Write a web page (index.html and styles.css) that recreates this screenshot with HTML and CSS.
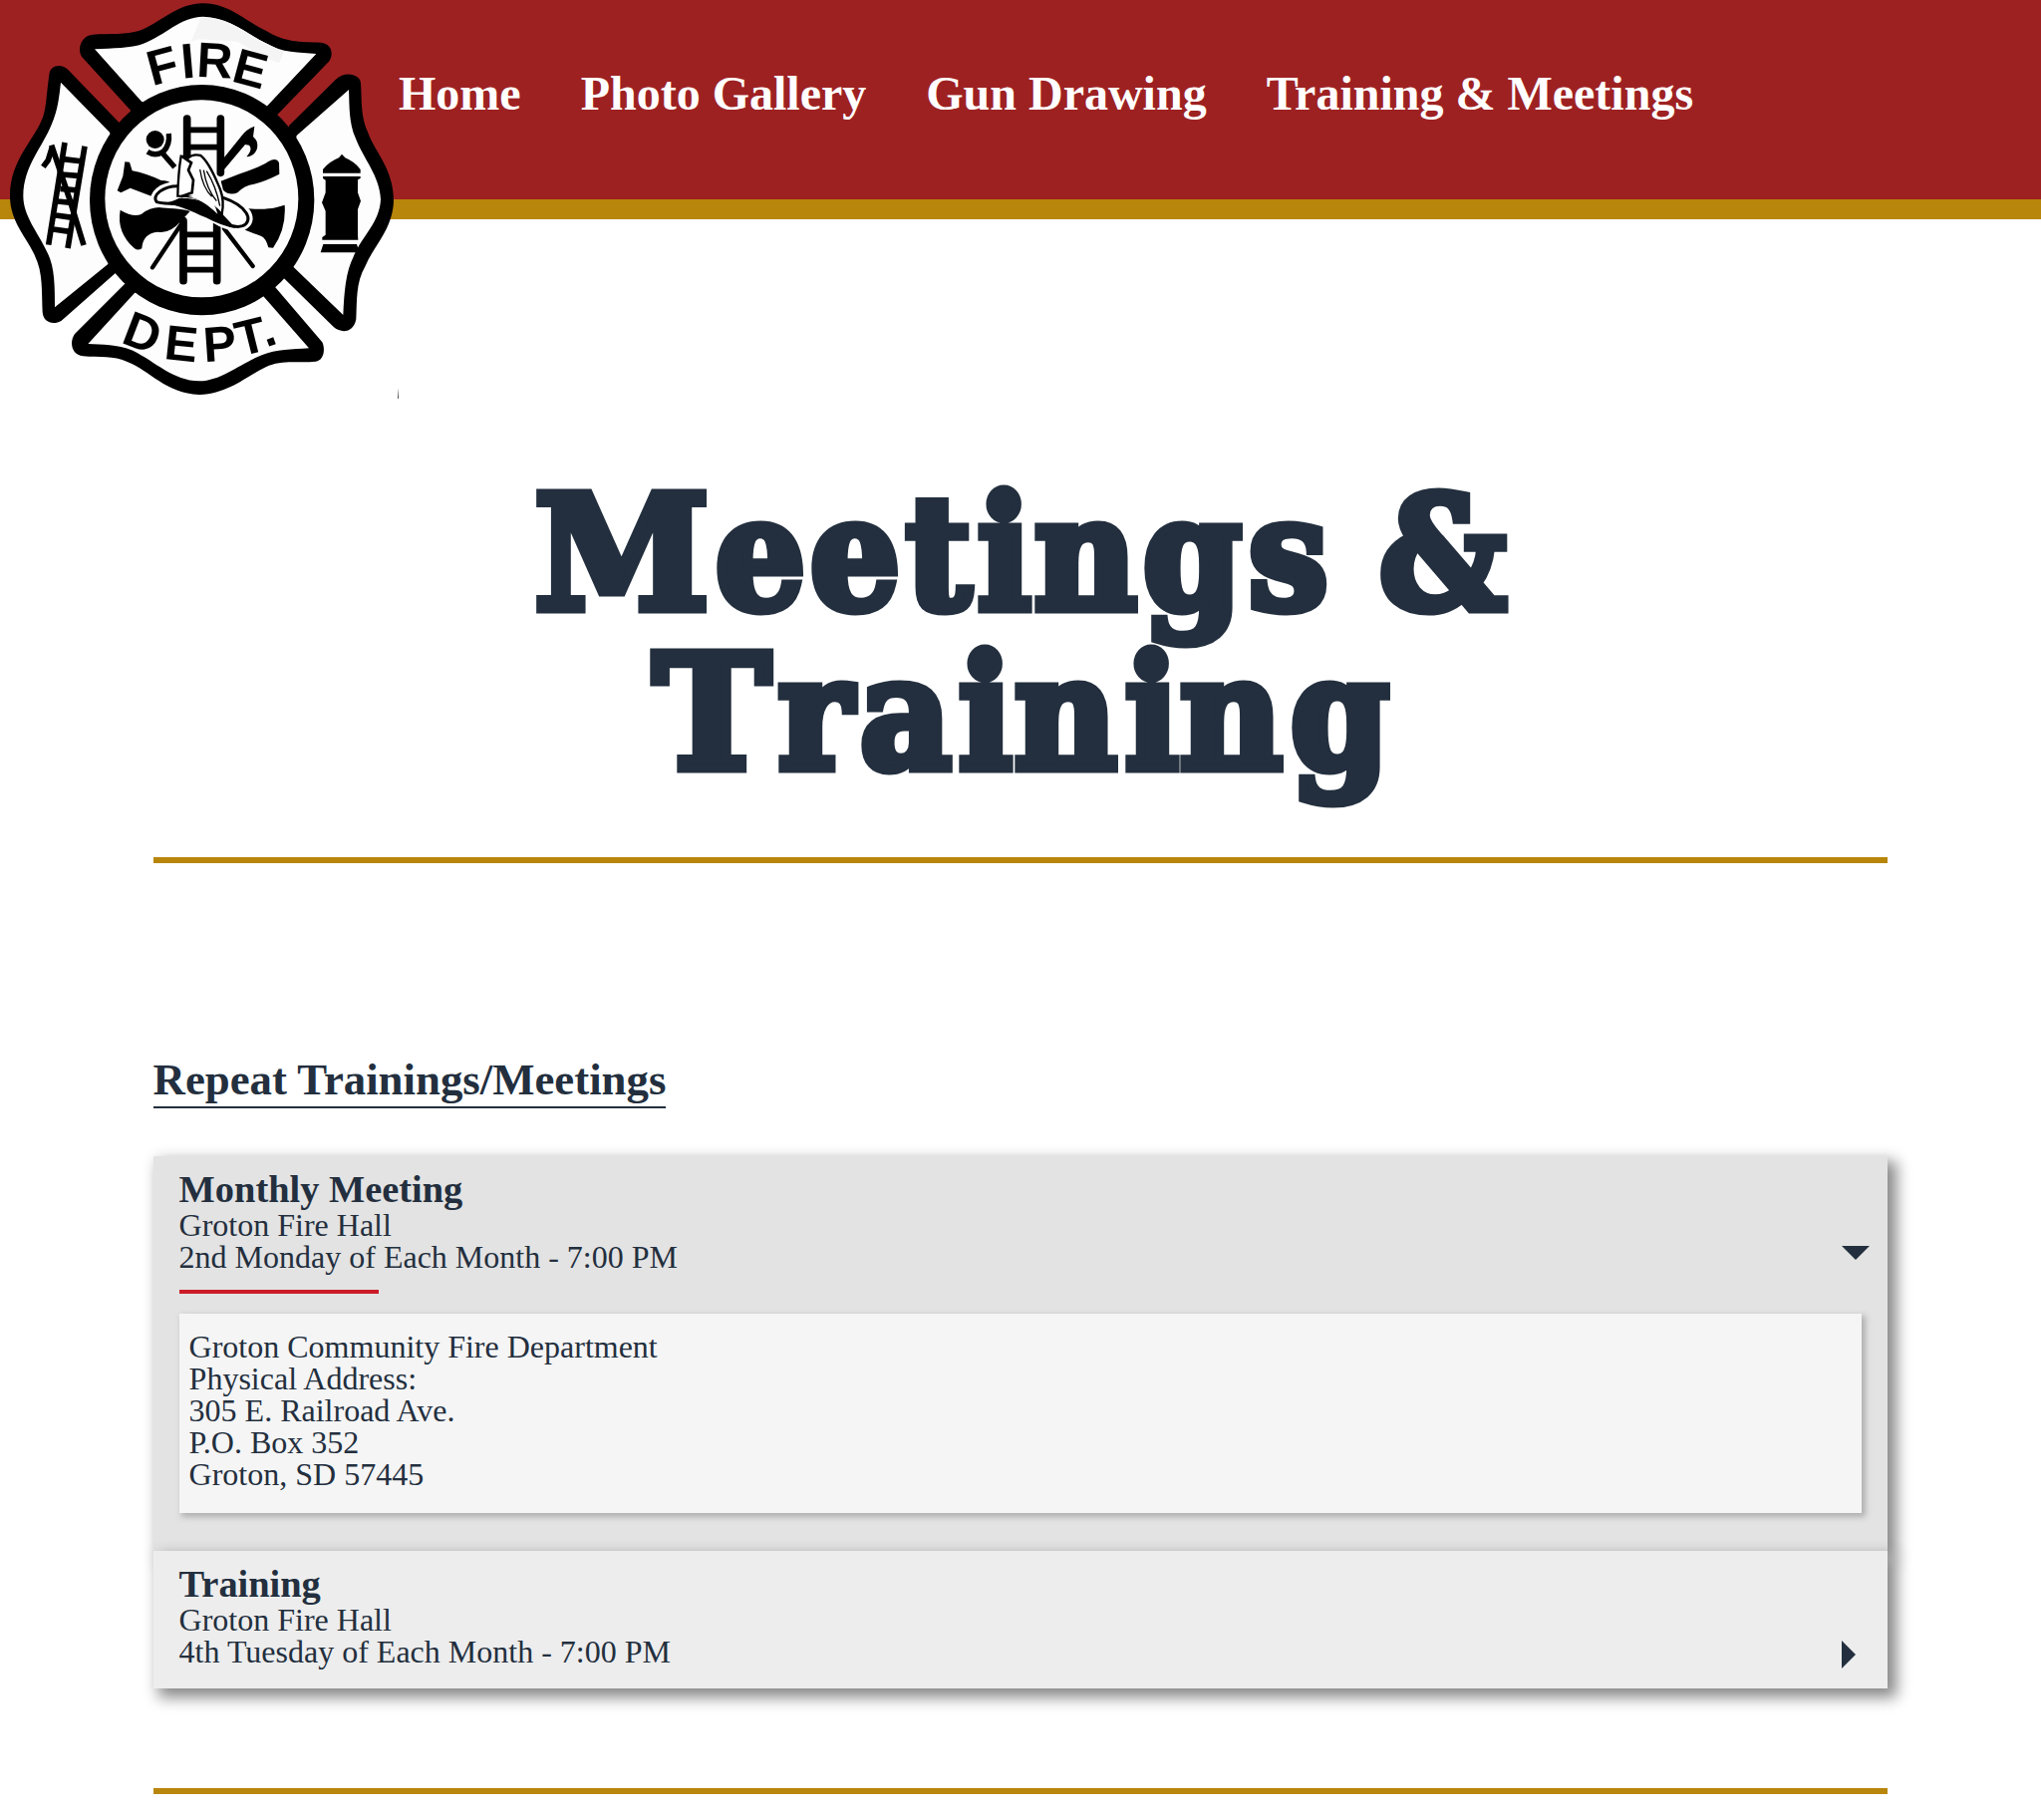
FILE: index.html
```html
<!DOCTYPE html>
<html lang="en">
<head>
<meta charset="utf-8">
<title>Meetings &amp; Training</title>
<link rel="stylesheet" href="styles.css">
</head>
<body>
<header class="site-header">
  <a class="logo" href="#" aria-label="Fire Dept.">
    <svg viewBox="0 0 1230 1230" width="410" height="410">
      <!-- shield arms -->
      <path d="M400 340L247 172C230 150 245 105 280 104C330 100 380 105 420 92C480 72 530 10 612 10C690 10 740 65 800 92C860 128 900 125 965 128C1000 130 1005 165 990 185L830 350Z"/>
      <path d="M358 368L205 210C185 190 150 195 148 225C140 280 140 320 130 350C105 420 30 480 30 590C30 670 85 720 105 770C130 820 125 880 128 940C130 970 160 980 185 965L350 820Z"/>
      <path d="M870 378L1010 240C1040 210 1085 225 1086 250C1090 310 1085 350 1108 400C1130 460 1185 510 1185 605C1182 690 1125 740 1100 800C1070 850 1075 910 1072 960C1065 1000 1030 1005 1005 985L855 838Z"/>
      <path d="M375 855L225 1005C208 1030 215 1068 250 1072C300 1078 340 1068 385 1090C450 1115 500 1185 600 1188C690 1185 745 1130 800 1105C850 1080 900 1095 950 1088C975 1085 980 1050 970 1030L825 860Z"/>
      <g fill="#fdfdfd">
        <path d="M285 148C340 145 395 145 430 132C500 105 540 52 612 50C690 52 740 100 800 130C850 160 900 158 952 162L803 320L608 400L426 305Z"/>
        <path d="M183 248L330 398L400 602L325 795L165 925C165 860 165 800 140 755C115 700 70 650 70 590C70 500 130 440 155 375C175 330 178 290 183 248Z"/>
        <path d="M1050 270L893 408L850 602L883 803L1033 948C1036 880 1040 820 1065 770C1090 710 1143 670 1146 600C1143 530 1095 480 1070 415C1050 370 1052 320 1050 270Z"/>
        <path d="M265 1035L405 882L608 800L793 892L930 1048C880 1052 830 1052 790 1068C720 1095 670 1145 600 1147C520 1145 470 1090 400 1055C350 1035 310 1038 265 1035Z"/>
      </g>
      <path fill="#f4f4f4" d="M605 52C690 52 740 100 800 130L855 156L840 190L780 165L715 125L600 118L575 125Z"/>
      <ellipse cx="608" cy="602" rx="338" ry="347"/>
      <ellipse cx="607" cy="598" rx="291" ry="297" fill="#fdfdfd"/>
      <!-- lettering -->
      <g class="logo-text">
        <text x="458 549 590 693" y="259 236 230 244" rotate="-15 -5 3 15">FIRE</text>
        <text x="361 491 615 723 801" y="1030 1080 1090 1073 1046" rotate="21 6 -4 -14 -20">DEPT.</text>
      </g>
      <!-- ladder and pike -->
      <g fill="none" stroke="#000" stroke-width="17">
        <path d="M195 429L146 737M255 440L204 747M190 479L250 486M186 525L243 530M182 568L235 573M174 606L230 612M168 648L224 656M160 690L215 698"/>
        <path d="M155 437C165 470 200 560 252 738M158 440L145 482L130 502"/>
      </g>
      <!-- hydrant -->
      <path d="M972 521V510Q990 487 1020 475L1029 464L1039 475Q1068 487 1085 510V521ZM972 531H1085V537L1077 541V580L1086 605L1077 630V707L1078 722H970V714L980 707V635L969 610L980 580V542L972 537ZM973 735H1074L1082 760H965Z"/>
      <!-- centre ladder -->
      <g fill="none" stroke="#000" stroke-width="23" stroke-linecap="round">
        <path d="M563 357V470M664 357V520M552 665V845M653 670V845"/>
        <path d="M563 391H664M563 443H664M552 706H653M552 760H653M552 812H653" stroke-width="17"/>
      </g>
      <!-- tools -->
      <circle cx="467" cy="420" r="27"/>
      <g fill="none" stroke="#000" stroke-width="13" stroke-linecap="round">
        <path d="M444 457Q468 472 492 456Q512 436 508 402M490 462L526 503" stroke-linecap="butt" stroke-width="16"/>
        <path d="M552 665L459 805M675 688L761 801"/>
      </g>
      <path d="M670 480L728 408Q740 390 766 380L762 412Q780 425 773 450Q765 470 742 472Q762 450 750 437L738 435L675 510Z"/>
      <path d="M376 487L390 488L398 514Q440 522 485 543Q510 543 518 555Q470 560 455 590L392 566L364 580L353 574L370 530Z"/>
      <path d="M665 545C720 522 780 506 808 486Q832 472 840 490L841 524Q800 545 765 554Q735 558 715 580Q690 590 672 572Z"/>
      <path d="M362 632Q400 655 425 645Q455 620 495 625L585 622L545 665Q510 705 475 698Q430 702 427 748Q415 755 405 748Q350 700 362 632Z"/>
      <path d="M745 628Q800 632 830 625L857 617Q862 690 822 746L808 745Q800 715 785 710Q750 700 715 680Z"/>
      <!-- helmet -->
      <path d="M540 560C490 558 455 590 472 608C500 618 560 605 620 640C660 668 700 690 730 680C765 665 745 620 672 595Z" fill="#fff" stroke="#fff" stroke-width="28"/>
      <path d="M540 560C490 558 455 590 472 608C500 618 560 605 620 640C660 668 700 690 730 680C765 665 745 620 672 595Z" fill="#fff" stroke="#000" stroke-width="9"/>
      <path d="M480 611C530 612 575 635 620 655Q670 682 710 687L665 640Q620 595 540 596Q510 612 480 611Z"/>
      <path d="M545 470L566 476Q580 462 604 468C632 490 650 540 663 570Q676 605 668 645C640 615 610 590 535 590C536 540 540 500 545 470Z" fill="#fff" stroke="#000" stroke-width="7"/>
      <path d="M547 470L576 490L567 512L582 542L578 580L545 592" fill="none" stroke="#000" stroke-width="8"/>
      <path d="M565 594Q600 592 655 644Q645 605 620 592Q600 585 565 594Z" fill="#fff"/>
      <path d="M602 510Q610 565 638 592M613 512Q622 570 652 605M622 515Q650 560 662 620" fill="none" stroke="#000" stroke-width="4"/>
      <path d="M1197 1167L1200 1199H1197Z" fill="#333"/>
    </svg>
  </a>
  <nav class="nav">
    <a href="#">Home</a>
    <a href="#">Photo Gallery</a>
    <a href="#">Gun Drawing</a>
    <a href="#">Training &amp; Meetings</a>
  </nav>
</header>

<main class="page">
  <h1 class="title">
    <svg viewBox="0 0 1740 380" width="1740" height="380">
      <text y="151"><tspan class="wide" x="382">M</tspan><tspan x="564 659 755 827 884 993 1099">eetings</tspan> <tspan x="1230">&amp;</tspan></text>
      <text y="311"><tspan class="wide" x="501">T</tspan><tspan x="627 709 808 864 975 1030 1141">raining</tspan></text>
    </svg>
  </h1>

  <section class="meetings">
    <h2 class="section-title">Repeat Trainings/Meetings</h2>
    <article class="item item-open">
      <div class="item-head">
        <div>
          <h3>Monthly Meeting</h3>
          <p>Groton Fire Hall</p>
          <p>2nd Monday of Each Month - 7:00 PM</p>
        </div>
        <svg class="arrow" viewBox="0 0 28 28" width="28" height="28"><path d="M0 0H28L14 14Z"/></svg>
      </div>
      <div class="accent"></div>
      <div class="details">
        <p>Groton Community Fire Department</p>
        <p>Physical Address:</p>
        <p>305 E. Railroad Ave.</p>
        <p>P.O. Box 352</p>
        <p>Groton, SD 57445</p>
      </div>
    </article>
    <article class="item">
      <div class="item-head">
        <div>
          <h3>Training</h3>
          <p>Groton Fire Hall</p>
          <p>4th Tuesday of Each Month - 7:00 PM</p>
        </div>
        <svg class="arrow" viewBox="0 0 28 28" width="28" height="28"><path d="M0 0V28L14 14Z"/></svg>
      </div>
    </article>
  </section>
</main>
</body>
</html>
```
FILE: styles.css
```css
* { box-sizing: border-box; margin: 0; padding: 0; }

body {
  font-family: "Liberation Serif", "Times New Roman", serif;
  font-size: 32px;
  line-height: 1;
  color: #232f3e;
  background: #fff;
}

.site-header {
  position: relative;
  height: 220px;
  padding: 67px 0 0 400px;
  background: #9e2122;
  border-bottom: 20px solid #b8860b;
}

.logo {
  position: absolute;
  top: 0;
  left: 0;
}

.logo svg { display: block; }

.logo-text {
  font-family: "Liberation Sans", Arial, sans-serif;
  font-size: 149px;
  font-weight: bold;
}

.nav { display: flex; gap: 60px; }

.nav a {
  font-size: 48px;
  line-height: 54px;
  font-weight: bold;
  color: #fff;
  text-decoration: none;
}

.page {
  width: 85%;
  margin: 0 auto;
  padding-top: 240px;
}

.title {
  height: 406px;
  border-bottom: 6px solid #b8860b;
}

.title svg { display: block; }

.title text {
  font-family: "DejaVu Serif Condensed", "DejaVu Serif", serif;
  font-size: 157px;
  font-weight: bold;
  fill: #232f3e;
  stroke: #232f3e;
  stroke-width: 9px;
}

.title .wide {
  font-family: "DejaVu Serif", serif;
  font-size: 159px;
}

.meetings {
  padding: 195px 0 100px;
  border-bottom: 6px solid #b8860b;
}

.section-title {
  width: fit-content;
  margin-bottom: 48px;
  padding-bottom: 4px;
  font-size: 44.8px;
  line-height: 45px;
  border-bottom: 2px solid #232f3e;
}

.item {
  position: relative;
  height: 138px;
  padding: 14px 26px 0;
  background: #ededed;
  box-shadow: 7px 7px 14px 2px #888;
}

.item-open {
  height: 396px;
  background: #e3e3e3;
}

.item-head {
  display: flex;
  justify-content: space-between;
  align-items: flex-end;
}

.item h3 {
  font-size: 38.4px;
  line-height: 39px;
}

.arrow {
  margin: 0 -8px -1px 0;
  fill: #232f3e;
}

.accent {
  width: 200px;
  height: 4px;
  margin: 17px 0 20px;
  background: #cc1c29;
}

.details {
  height: 200px;
  padding: 17px 10px;
  background: #f5f5f5;
  box-shadow: 3px 3px 6px 1px #b0b0b0;
}
```
